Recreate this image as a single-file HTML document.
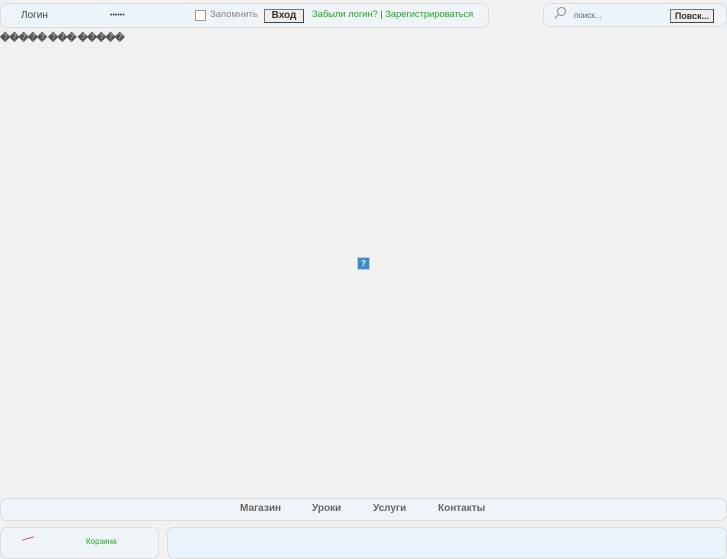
<!DOCTYPE html>
<html><head><meta charset="utf-8"><style>
body{margin:0;width:727px;height:545px;background:#f1f1f1;font-family:"Liberation Sans",sans-serif;font-size:10px;color:#555;position:relative;overflow:hidden}
.box{position:absolute;background:#eef4f8;border:1px solid #ddd;border-radius:7px}
.inp{position:absolute;background:#e8f3fa;height:17px;line-height:17px;font-size:10px;color:#444}
.btn{position:absolute;border:1px solid #777;border-right-color:#444;border-bottom-color:#444;background:#eee;font-weight:bold;font-size:10px;color:#333;text-align:center;line-height:12px}
a{color:#2a2;text-decoration:none}
.nav{position:absolute;top:503px;font-weight:bold;font-size:10px;color:#666}
</style></head><body>
<div class="box" style="left:0;top:3px;width:487px;height:23px"></div>
<div class="inp" style="left:17px;top:7px;width:80px;padding-left:4px">Логин</div>
<div class="inp" style="left:107px;top:7px;width:80px;padding-left:3px;font-size:7px">••••••</div>
<div style="position:absolute;left:195px;top:10px;width:9px;height:9px;border:1px solid #999;background:#fff"></div>
<div style="position:absolute;left:210px;top:9px;color:#888;font-size:9.5px">Запомнить</div>
<div class="btn" style="left:264px;top:9px;width:38px;height:12px">Вход</div>
<div style="position:absolute;left:312px;top:9px;color:#555;font-size:9.5px;letter-spacing:-0.1px"><a>Забыли логин?</a> | <a>Зарегистрироваться</a></div>
<div class="box" style="left:543px;top:3px;width:182px;height:22px"></div>
<div style="position:absolute;left:557px;top:7px;width:7px;height:7px;border:1px solid #888;border-radius:50%"></div>
<div style="position:absolute;left:554px;top:16px;width:5px;height:1px;background:#888;transform:rotate(-45deg)"></div>
<div class="inp" style="left:570px;top:7px;width:96px;padding-left:4px;font-size:8px;color:#666">поиск...</div>
<div class="btn" style="left:670px;top:9px;width:42px;height:12px;font-size:9px">Повск...</div>
<div style="position:absolute;left:0;top:33px;font-size:10px;font-weight:bold;color:#555;letter-spacing:-1px;word-spacing:0;white-space:pre">����� ��� �����</div>
<div style="position:absolute;left:357px;top:257px;width:11px;height:11px;background:#3a8bd0;border:1px solid #bcd;color:#fff;font-size:8px;font-weight:bold;text-align:center;line-height:11px">?</div>
<div class="box" style="left:0;top:498px;width:725px;height:21px"></div>
<div class="nav" style="left:240px">Магазин</div>
<div class="nav" style="left:312px">Уроки</div>
<div class="nav" style="left:373px">Услуги</div>
<div class="nav" style="left:438px">Контакты</div>
<div class="box" style="left:0;top:527px;width:157px;height:30px"></div>
<div class="box" style="left:167px;top:527px;width:558px;height:30px;background:#e8f3fa"></div>
<div style="position:absolute;left:86px;top:537px;font-size:8px;color:#2a2">Корзина</div>
<div style="position:absolute;left:22px;top:538px;width:12px;height:1px;background:#d44;transform:rotate(-15deg)"></div>
</body></html>
